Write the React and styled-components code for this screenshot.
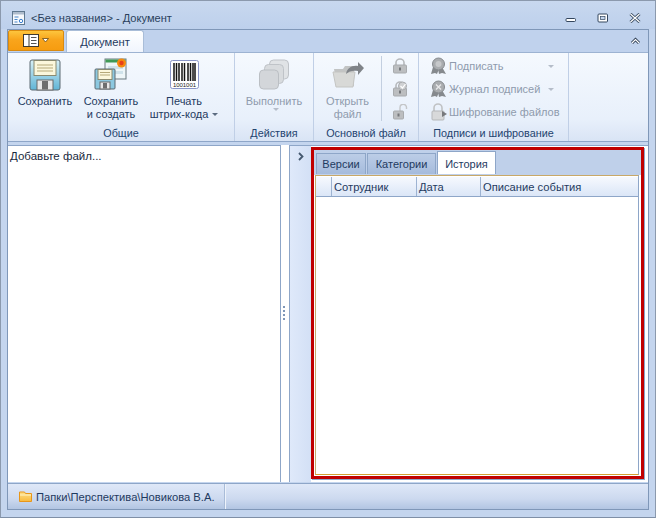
import React from "react";
import styled, { createGlobalStyle } from "styled-components";

const Global = createGlobalStyle`
    html, body {
        margin: 0;
        padding: 0;
        background: #c4d5ee;
    }
    * {
        box-sizing: border-box;
    }
`;

const Win = styled.div`
    width: 656px;
    height: 518px;
    display: flex;
    flex-direction: column;
    overflow: hidden;
    border: 1px solid #8b99ad;
    border-bottom-color: #7f8fa6;
    background: #c4d5ee;
    font-family: "Liberation Sans", Arial, sans-serif;
    font-size: 11px;
    color: #1f3a5f;
`;

const TitleBar = styled.div`
    height: 28px;
    flex: none;
    display: flex;
    align-items: center;
    padding: 5px 4px 0 10px;
    background: linear-gradient(#c8d8ef, #bdd0ec);
`;

const TitleText = styled.div`
    margin-left: 5px;
    flex: 1;
    font-size: 11.1px;
    color: #2a3f5c;
`;

const WinButton = styled.div`
    width: 32px;
    height: 16px;
    display: flex;
    align-items: center;
    justify-content: center;
`;

const Frame = styled.div`
    flex: 1;
    min-height: 0;
    margin: 0 6px 7px 6px;
    display: flex;
    flex-direction: column;
    border: 1px solid #7f97b8;
    background: #c4d5ee;
`;

const TabRow = styled.div`
    height: 22px;
    flex: none;
    display: flex;
    align-items: flex-end;
    background: #c0d2ed;
`;

const AppButton = styled.div`
    width: 56px;
    height: 21px;
    margin-bottom: 1px;
    display: flex;
    align-items: center;
    justify-content: center;
    gap: 3px;
    border: 1px solid #d98a10;
    border-radius: 2px 2px 0 0;
    background: linear-gradient(#fdc53d, #f9a51c 45%, #f69c10);
`;

const RibbonTab = styled.div`
    width: 78px;
    height: 22px;
    margin-left: 2px;
    display: flex;
    align-items: center;
    justify-content: center;
    border: 1px solid #a9bdd8;
    border-bottom: none;
    border-radius: 3px 3px 0 0;
    background: linear-gradient(#ffffff, #f0f5fd);
    font-size: 11.2px;
    color: #1f3a5f;
`;

const Collapse = styled.div`
    margin-left: auto;
    align-self: center;
    padding-right: 7px;
    display: flex;
`;

const Ribbon = styled.div`
    height: 90px;
    flex: none;
    display: flex;
    border-top: 1px solid #9db3d2;
    border-bottom: 1px solid #8ea6c8;
    background: linear-gradient(#f5f9fe, #e8f0fb 75%, #d9e4f5);
`;

const Group = styled.div`
    width: ${(p) => p.$w}px;
    flex: none;
    display: flex;
    flex-direction: column;
    border-right: 1px solid #c0cfe6;
`;

const GroupBody = styled.div`
    flex: 1;
    display: flex;
    min-height: 0;
`;

const GroupLabel = styled.div`
    height: 15px;
    flex: none;
    text-align: center;
    font-size: 10.8px;
    color: #23436e;
    line-height: 14px;
`;

const BigButton = styled.div`
    width: ${(p) => p.$w}px;
    flex: none;
    display: flex;
    flex-direction: column;
    align-items: center;
    padding-top: 5px;
    text-align: center;
    line-height: 13px;
    color: ${(p) => (p.$off ? "#8f9bad" : "#1f3a5f")};
`;

const BigIcon = styled.div`
    height: 33px;
    margin-bottom: 4px;
    display: flex;
    align-items: center;
    justify-content: center;
`;

const Caret = styled.span`
    display: inline-block;
    width: 0;
    height: 0;
    margin-left: 4px;
    vertical-align: 2px;
    border-left: 3px solid transparent;
    border-right: 3px solid transparent;
    border-top: 3px solid ${(p) => p.$c || "#5b6b80"};
`;

const IconColumn = styled.div`
    width: 36px;
    flex: none;
    margin: 3px 0 5px;
    display: flex;
    flex-direction: column;
    align-items: center;
    gap: 7px;
    padding-top: 2px;
    border-left: 1px solid #c3cfe0;
`;

const SmallList = styled.div`
    flex: 1;
    display: flex;
    flex-direction: column;
    padding: 1px 0 0 11px;
`;

const SmallRow = styled.div`
    height: 23px;
    display: flex;
    align-items: center;
    color: #8f9bad;
`;

const SmallText = styled.span`
    margin-left: 1px;
    flex: 1;
`;

const RowCaret = styled.span`
    width: 24px;
    flex: none;
`;

const Body = styled.div`
    flex: 1;
    min-height: 0;
    display: flex;
    padding-top: 3px;
    background: #c4d5ee;
`;

const LeftPanel = styled.div`
    width: 272px;
    flex: none;
    padding: 4px 2px;
    margin-bottom: 1px;
    border-top: 1px solid #8ea6c8;
    background: #fff;
    font-size: 11.5px;
    color: #1a2a40;
`;

const Splitter = styled.div`
    width: 9px;
    flex: none;
    display: flex;
    flex-direction: column;
    align-items: center;
    justify-content: center;
    gap: 2px;
    padding: 0 2px 2px 0;
    margin-bottom: 1px;
    border-left: 1px solid #8ea6c8;
    background: #fff;
`;

const Dot = styled.i`
    width: 2px;
    height: 2px;
    background: #7f97b8;
`;

const RightPanel = styled.div`
    flex: 1;
    min-width: 0;
    display: flex;
    margin-bottom: 1px;
    border-left: 1px solid #8ea6c8;
    border-top: 1px solid #8ea6c8;
    background: #fff;
`;

const SideStrip = styled.div`
    width: 21px;
    flex: none;
    display: flex;
    justify-content: center;
    padding-top: 6px;
    background: linear-gradient(90deg, #dfe9fa, #d3e0f5);
`;

const Highlight = styled.div`
    flex: 1;
    min-width: 0;
    margin: 1px 4px 3px 0;
    display: flex;
    flex-direction: column;
    border: 3px solid #c00000;
    box-shadow: 1px 1px 0 #8ea6c8;
    background: #fff;
`;

const InnerTabs = styled.div`
    height: 25px;
    flex: none;
    display: flex;
    align-items: flex-end;
    gap: 1px;
    padding: 0 0 1px 2px;
    background: #bfd0ea;
`;

const InnerTab = styled.div`
    width: ${(p) => p.$w}px;
    height: ${(p) => (p.$on ? 23 : 21)}px;
    display: flex;
    align-items: center;
    justify-content: center;
    padding-top: ${(p) => (p.$on ? 1 : 0)}px;
    border: 1px solid #8ea6c8;
    border-bottom: none;
    background: ${(p) => (p.$on ? "#fff" : "linear-gradient(#bccde7, #a5bbdc)")};
    color: #1f3a5f;
`;

const TableWrap = styled.div`
    flex: 1;
    min-height: 0;
    margin: 0 2px 1px 1px;
    background: #fff;
    border: 1px solid #c4ab6c;
    border-right-color: #8ea6c8;
    border-top-color: #c8a868;
    border-bottom-color: #d4a030;
`;

const HeaderRow = styled.div`
    height: 20px;
    display: flex;
    margin: 1px 0 0 0;
    border-bottom: 1px solid #8ea6c8;
    background: linear-gradient(#f6f9fe, #dbe6f7);
    font-size: 11.2px;
`;

const HeaderCell = styled.div`
    width: ${(p) => p.$w}px;
    flex: ${(p) => (p.$w ? "none" : 1)};
    display: flex;
    align-items: center;
    padding-left: 2px;
    border-right: ${(p) => (p.$w ? "1px solid #9db3d2" : "none")};
    color: #1f3a5f;
`;

const StatusBar = styled.div`
    height: 26px;
    flex: none;
    display: flex;
    align-items: center;
    padding-left: 11px;
    border-top: 1px solid #8ea6c8;
    background: linear-gradient(#dfe8f8, #ccd9ef 60%, #b2c5e2);
    font-size: 11.2px;
    color: #1f3a5f;
`;

const StatusItem = styled.div`
    width: 206px;
    height: 100%;
    display: flex;
    align-items: center;
    gap: 4px;
    border-right: 1px solid #a9bcd8;
    box-shadow: 1px 0 0 #eef3fb;
`;

const DocIcon = () => (
    <svg width="15" height="16" viewBox="0 0 15 16">
        <rect x="1.5" y="1.5" width="12" height="13" fill="#f6f9fd" stroke="#5f7890" />
        <rect x="2" y="2" width="11" height="2.5" fill="#aebccd" />
        <path d="M3.5 7h4M3.5 9.5h3M3.5 12h3" stroke="#4a86c8" />
        <circle cx="10" cy="11" r="1.7" fill="none" stroke="#3a7fd0" />
    </svg>
);

const AppGlyph = () => (
    <>
        <svg width="16" height="13" viewBox="0 0 16 13">
            <rect x="0.5" y="0.5" width="15" height="12" fill="#fff" stroke="#3f3a30" />
            <path d="M6 1v11" stroke="#3f3a30" />
            <path d="M8 3.5h5.5M8 6.5h5.5M8 9.5h5.5" stroke="#555" />
        </svg>
        <svg width="7" height="5" viewBox="0 0 7 5">
            <path d="M0.5 0.5h6L3.5 4z" fill="#fff" stroke="#6b4a10" strokeWidth="0.8" />
        </svg>
    </>
);

const Floppy = () => (
    <svg width="32" height="32" viewBox="0 0 32 32">
        <defs>
            <linearGradient id="fl" x1="0" y1="0" x2="0" y2="1">
                <stop offset="0" stopColor="#d8f0f6" />
                <stop offset="1" stopColor="#5fb4d6" />
            </linearGradient>
        </defs>
        <rect x="1" y="1" width="30" height="30" rx="2" fill="url(#fl)" stroke="#5d6a72" />
        <rect x="5" y="1.5" width="22" height="15" fill="#fbf7dc" stroke="#8a8a70" />
        <path d="M8 6h16M8 9h16M8 12h16" stroke="#b5a97a" />
        <rect x="8" y="21" width="16" height="10" fill="#e8e8e8" stroke="#6a6a6a" />
        <rect x="13" y="22" width="6" height="8.5" fill="#6e6e6e" />
    </svg>
);

const SaveNew = () => (
    <svg width="34" height="33" viewBox="0 0 34 33">
        <rect x="11" y="1" width="21" height="20" fill="#eef6f8" stroke="#6a7a80" />
        <rect x="11.5" y="1.5" width="20" height="3" fill="#3f9a55" />
        <rect x="14" y="8" width="15" height="3" fill="#cfe2ea" />
        <rect x="14" y="13" width="15" height="3" fill="#cfe2ea" />
        <circle cx="27.5" cy="5" r="4.5" fill="#f58a10" />
        <circle cx="27.5" cy="5" r="2.2" fill="#e8401a" />
        <rect x="1" y="11" width="20" height="20" rx="1" fill="#8cc8e0" stroke="#5d6a72" />
        <rect x="4" y="11.5" width="14" height="10" fill="#fbf7dc" stroke="#8a8a70" />
        <path d="M6 14.5h10M6 17h10" stroke="#b5a97a" />
        <rect x="6" y="24" width="10" height="7" fill="#e8e8e8" stroke="#6a6a6a" />
        <rect x="9" y="25" width="4" height="5.5" fill="#6e6e6e" />
    </svg>
);

const Barcode = () => (
    <svg width="29" height="29" viewBox="0 0 29 29">
        <rect x="0.5" y="0.5" width="28" height="28" rx="2" fill="#fff" stroke="#8a96c8" />
        <path
            d="M4 3v18M6.5 3v18M9 3v18M12 3v18M14.5 3v18M18 3v18M20.5 3v18M23 3v18M25 3v18"
            stroke="#111"
            strokeWidth="1.5"
        />
        <text x="3" y="27" fontSize="6" fontFamily="Liberation Sans" fill="#222" textLength="23">
            1001001
        </text>
    </svg>
);

const Stacked = () => (
    <svg width="32" height="32" viewBox="0 0 32 32">
        <rect x="11.5" y="1" width="19" height="19" rx="4" fill="#e0e3e6" stroke="#bfc3c8" />
        <rect x="6.5" y="5.5" width="19" height="19" rx="4" fill="#d8dbde" stroke="#bfc3c8" />
        <rect x="1.5" y="11" width="19" height="19" rx="4" fill="#d3d6da" stroke="#bbbfc4" />
    </svg>
);

const OpenFolder = () => (
    <svg width="32" height="28" viewBox="0 0 32 28">
        <path d="M2 8h9l2 -3h9v20H5z" fill="#c2c4c4" />
        <path d="M1 11h22l-2 15H4z" fill="#d8d9d7" stroke="#c4c5c3" />
        <path d="M14 13c1 -6 6 -9 12 -8V1l6 6 -6 7v-4c-5 -1 -9 0 -12 3z" fill="#7f8388" />
    </svg>
);

const Lock = ({ kind }) => (
    <svg width="16" height="16" viewBox="0 0 16 16">
        {kind === "open" ? (
            <path d="M8 7V3.5a3 3 0 0 1 6.5 0V5" fill="none" stroke="#c4c6c8" strokeWidth="1.4" />
        ) : (
            <path d="M4 7V4.5a4 3.5 0 0 1 8 0V7" fill="none" stroke="#b6b9bc" strokeWidth="1.6" />
        )}
        <rect x="1.5" y="7" width={kind === "open" ? 10 : 13} height="8" rx="1" fill="#bcbec0" stroke="#a8abae" />
        <rect x={kind === "open" ? 5.5 : 7} y="9.5" width="2" height="3" fill="#74777a" />
        {kind === "check" && (
            <>
                <circle cx="10.5" cy="5" r="4" fill="#cfd1d3" stroke="#a8abae" />
                <path d="M8.5 5l2 2 3 -4" fill="none" stroke="#fff" strokeWidth="1.2" />
            </>
        )}
    </svg>
);

const Medal = ({ x }) => (
    <svg width="18" height="18" viewBox="0 0 18 18">
        <path d="M3 10l-2 7 4 -1 2 1 2 -5zM12 10l4 7 -4 -1 -3 1 -1 -5z" fill="#85898d" />
        <circle cx="8.5" cy="7" r="6" fill="#a9acaf" stroke="#85898d" />
        {x ? (
            <path d="M6 4.5l5 5M11 4.5l-5 5" stroke="#e8e9ea" strokeWidth="1.4" />
        ) : (
            <circle cx="8.5" cy="7" r="3" fill="#c6c8ca" />
        )}
    </svg>
);

const LockKey = () => (
    <svg width="18" height="18" viewBox="0 0 18 18">
        <path d="M4 8V5a4 4 0 0 1 8 0v3" fill="none" stroke="#c0c2c4" strokeWidth="1.6" />
        <rect x="2" y="8" width="12" height="9" rx="1" fill="#d8d9da" stroke="#b5b7b9" />
        <path d="M12 8l5 3 -5 3z" fill="#77797c" />
    </svg>
);

const Folder = () => (
    <svg width="13" height="11" viewBox="0 0 13 11">
        <defs>
            <linearGradient id="fo" x1="0" y1="0" x2="0" y2="1">
                <stop offset="0" stopColor="#fde08a" />
                <stop offset="1" stopColor="#f8b93c" />
            </linearGradient>
        </defs>
        <path d="M0.5 1h5l1 1.5h6v8h-12z" fill="url(#fo)" stroke="#e8961a" />
        <path d="M1 4h11" stroke="#fff3c4" />
    </svg>
);

export default function App() {
    return (
        <Win>
            <Global />
            <TitleBar>
                <DocIcon />
                <TitleText>&lt;Без названия&gt; - Документ</TitleText>
                <WinButton>
                    <svg width="12" height="10" viewBox="0 0 12 10">
                        <rect x="1" y="5.5" width="9.5" height="3" rx="1" fill="#fff" stroke="#33465e" />
                    </svg>
                </WinButton>
                <WinButton>
                    <svg width="12" height="10" viewBox="0 0 12 10">
                        <rect x="1" y="1" width="9.5" height="8" rx="1" fill="#fff" stroke="#33465e" />
                        <rect x="3.5" y="3.5" width="4.5" height="3" fill="#c4d5ee" stroke="#33465e" strokeWidth="0.7" />
                    </svg>
                </WinButton>
                <WinButton>
                    <svg width="12" height="10" viewBox="0 0 12 10">
                        <path d="M1.5 1l9 8M10.5 1l-9 8" stroke="#33465e" strokeWidth="3" />
                        <path d="M1.5 1l9 8M10.5 1l-9 8" stroke="#fff" strokeWidth="1.3" />
                    </svg>
                </WinButton>
            </TitleBar>
            <Frame>
                <TabRow>
                    <AppButton>
                        <AppGlyph />
                    </AppButton>
                    <RibbonTab>Документ</RibbonTab>
                    <Collapse>
                        <svg width="11" height="8" viewBox="0 0 11 8">
                            <path d="M2 6l3.5 -3.5L9 6" fill="none" stroke="#2a3a50" strokeWidth="3" />
                            <path d="M2 6l3.5 -3.5L9 6" fill="none" stroke="#fff" strokeWidth="1.2" />
                        </svg>
                    </Collapse>
                </TabRow>
                <Ribbon>
                    <Group $w={227}>
                        <GroupBody>
                            <BigButton $w={74}>
                                <BigIcon>
                                    <Floppy />
                                </BigIcon>
                                Сохранить
                            </BigButton>
                            <BigButton $w={58}>
                                <BigIcon>
                                    <SaveNew />
                                </BigIcon>
                                Сохранить
                                <br />и создать
                            </BigButton>
                            <BigButton $w={88}>
                                <BigIcon>
                                    <Barcode />
                                </BigIcon>
                                Печать
                                <br />
                                <span>
                                    штрих-кода
                                    <Caret />
                                </span>
                            </BigButton>
                        </GroupBody>
                        <GroupLabel>Общие</GroupLabel>
                    </Group>
                    <Group $w={79}>
                        <GroupBody>
                            <BigButton $w={78} $off>
                                <BigIcon>
                                    <Stacked />
                                </BigIcon>
                                Выполнить
                                <br />
                                <Caret $c="#b5bdc9" />
                            </BigButton>
                        </GroupBody>
                        <GroupLabel>Действия</GroupLabel>
                    </Group>
                    <Group $w={105}>
                        <GroupBody>
                            <BigButton $w={67} $off>
                                <BigIcon>
                                    <OpenFolder />
                                </BigIcon>
                                Открыть
                                <br />
                                файл
                            </BigButton>
                            <IconColumn>
                                <Lock />
                                <Lock kind="check" />
                                <Lock kind="open" />
                            </IconColumn>
                        </GroupBody>
                        <GroupLabel>Основной файл</GroupLabel>
                    </Group>
                    <Group $w={150}>
                        <GroupBody>
                            <SmallList>
                                <SmallRow>
                                    <Medal />
                                    <SmallText>Подписать</SmallText>
                                    <RowCaret>
                                        <Caret $c="#b5bdc9" />
                                    </RowCaret>
                                </SmallRow>
                                <SmallRow>
                                    <Medal x />
                                    <SmallText>Журнал подписей</SmallText>
                                    <RowCaret>
                                        <Caret $c="#b5bdc9" />
                                    </RowCaret>
                                </SmallRow>
                                <SmallRow>
                                    <LockKey />
                                    <SmallText>Шифрование файлов</SmallText>
                                </SmallRow>
                            </SmallList>
                        </GroupBody>
                        <GroupLabel>Подписи и шифрование</GroupLabel>
                    </Group>
                </Ribbon>
                <Body>
                    <LeftPanel>Добавьте файл...</LeftPanel>
                    <Splitter>
                        <Dot />
                        <Dot />
                        <Dot />
                        <Dot />
                    </Splitter>
                    <RightPanel>
                        <SideStrip>
                            <svg width="8" height="9" viewBox="0 0 8 9">
                                <path d="M2 1l3.5 3.5L2 8" fill="none" stroke="#45586f" strokeWidth="1.8" />
                            </svg>
                        </SideStrip>
                        <Highlight>
                            <InnerTabs>
                                <InnerTab $w={50}>Версии</InnerTab>
                                <InnerTab $w={69}>Категории</InnerTab>
                                <InnerTab $w={59} $on>
                                    История
                                </InnerTab>
                            </InnerTabs>
                            <TableWrap>
                                <HeaderRow>
                                    <HeaderCell $w={16} />
                                    <HeaderCell $w={85}>Сотрудник</HeaderCell>
                                    <HeaderCell $w={64}>Дата</HeaderCell>
                                    <HeaderCell>Описание события</HeaderCell>
                                </HeaderRow>
                            </TableWrap>
                        </Highlight>
                    </RightPanel>
                </Body>
                <StatusBar>
                    <StatusItem>
                        <Folder />
                        Папки\Перспектива\Новикова В.А.
                    </StatusItem>
                </StatusBar>
            </Frame>
        </Win>
    );
}
